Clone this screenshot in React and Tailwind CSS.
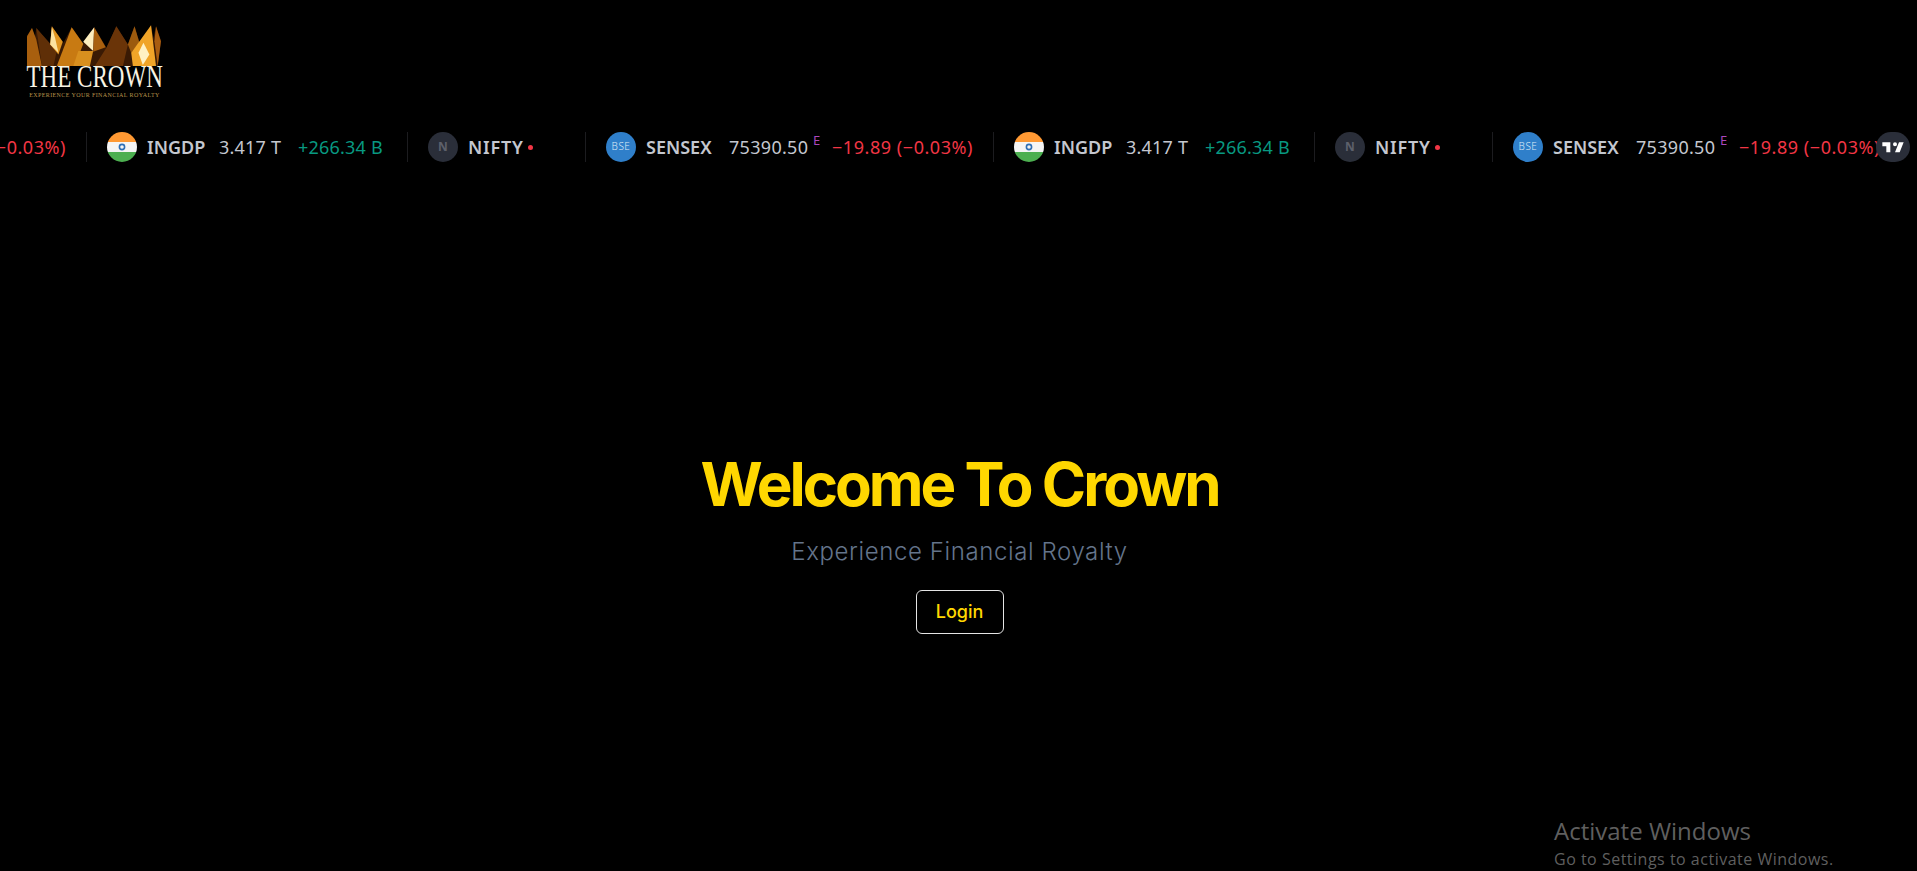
const UP = "text-[#089981]";
const DOWN = "text-[#f23645]";

function Flag() {
  return (
    <svg width="30" height="30" viewBox="0 0 30 30" className="shrink-0">
      <defs>
        <clipPath id="flag-circle"><circle cx="15" cy="15" r="15" /></clipPath>
      </defs>
      <g clipPath="url(#flag-circle)">
        <rect width="30" height="10" fill="#ff9933" />
        <rect y="10" width="30" height="10" fill="#f5f5f5" />
        <rect y="20" width="30" height="10" fill="#4caf50" />
      </g>
      <circle cx="15" cy="15" r="2.6" fill="none" stroke="#2f6fb5" strokeWidth="1.6" />
    </svg>
  );
}

function Ingdp() {
  return (
    <div className="flex h-[30px] w-[321px] shrink-0 items-center border-l border-[#1c1c1f] pl-5">
      <Flag />
      <span className="ml-[10px] w-[57px] font-semibold text-[#c4c7cf]">INGDP</span>
      <span className="ml-[15px] w-[64px] tracking-[0.2px] text-[#c4c7cf]">3.417 T</span>
      <span className={`ml-[15px] tracking-[0.2px] ${UP}`}>+266.34 B</span>
    </div>
  );
}

function Nifty() {
  return (
    <div className="flex h-[30px] w-[178px] shrink-0 items-center border-l border-[#1c1c1f] pl-5">
      <div className="flex h-[30px] w-[30px] items-center justify-center rounded-full bg-[#2a2e39] text-xs font-bold text-[#5d606b]">N</div>
      <span className="ml-[10px] w-[55px] font-semibold tracking-[0.8px] text-[#c4c7cf]">NIFTY</span>
      <span className="ml-[5px] h-[5px] w-[5px] rounded-full bg-[#f23645]" />
    </div>
  );
}

function Sensex() {
  return (
    <div className="flex h-[30px] w-[408px] shrink-0 items-center border-l border-[#1c1c1f] pl-5">
      <div className="flex h-[30px] w-[30px] items-center justify-center rounded-full bg-[#2f7fca] text-[10px] font-light tracking-[0.5px] text-[#dbe9f6]">BSE</div>
      <span className="ml-[10px] w-[68px] font-semibold text-[#c4c7cf]">SENSEX</span>
      <span className="ml-[15px] w-[81px] tracking-[0.3px] text-[#c4c7cf]">75390.50</span>
      <span className="ml-[3px] w-[16px] self-start text-[13px] leading-[16px] text-[#ab47bc]">E</span>
      <span className={`ml-[3px] tracking-[0.55px] ${DOWN}`}>−19.89 (−0.03%)</span>
    </div>
  );
}

function Crown() {
  return (
    <svg width="137" height="43" viewBox="78 68 412 130" className="block">
      <polygon points="80,195 80,105 95,80 104,108 108,80 150,130 155,75 190,125 215,78 250,128 283,78 320,140 350,75 385,130 405,75 420,125 455,72 462,110 470,75 485,120 475,195" fill="#3a1a04" />
      <polygon points="80,195 80,105 95,80 108,115 125,195" fill="#a85f0e" />
      <polygon points="108,80 170,150 160,195 125,195" fill="#5f2f07" />
      <polygon points="155,75 188,122 175,160 150,130" fill="#e0941f" />
      <polygon points="155,78 165,110 175,155 150,130" fill="#fde3a0" />
      <polygon points="215,78 250,128 225,195 170,195" fill="#c87a12" />
      <polygon points="250,122 283,78 280,150" fill="#fdeebf" />
      <polygon points="283,78 318,138 280,152" fill="#a9600f" />
      <polygon points="235,150 280,150 270,195 220,195" fill="#d88f1e" />
      <polygon points="350,75 385,130 370,195 285,195 320,140" fill="#6a3408" />
      <polygon points="405,75 420,125 395,155 385,130" fill="#9c5a0e" />
      <polygon points="455,72 470,195 400,195 395,155" fill="#f0a428" />
      <polygon points="432,125 450,160 430,192 417,155" fill="#fff1c4" />
      <polygon points="470,75 485,120 475,195 465,120" fill="#a85c10" />
    </svg>
  );
}

function Logo() {
  return (
    <div className="flex w-[137px] flex-col items-center">
      <Crown />
      <div className="-mt-[4px] scale-x-[0.72] whitespace-nowrap font-['Liberation_Serif',serif] text-[32px] leading-[26px] text-[#f8f3e3]">THE CROWN</div>
      <div className="mt-[2px] whitespace-nowrap font-['Liberation_Serif',serif] text-[6px] leading-[8px] tracking-[0.4px] text-[#b8934a]">EXPERIENCE YOUR FINANCIAL ROYALTY</div>
    </div>
  );
}

export default function App() {
  return (
    <div className="relative flex h-screen flex-col overflow-hidden bg-black font-['Inter',sans-serif]">
      <header className="h-[132px] pl-[26px] pt-6">
        <Logo />
      </header>

      {/* TICKER */}
      <div className="relative overflow-hidden font-['Noto_Sans',sans-serif] text-lg">
        <div className="-ml-[821px] flex whitespace-nowrap">
          <Ingdp /><Nifty /><Sensex />
          <Ingdp /><Nifty /><Sensex />
          <Ingdp /><Nifty /><Sensex />
        </div>
        <div className="absolute right-[7px] top-0 flex h-[30px] w-[34px] items-center justify-center rounded-full bg-[#2a2e39]">
          <svg width="24" height="19" viewBox="0 0 36 28" fill="#fff">
            <path d="M14 6H2v6h6v9h6V6Zm14 15h-7l6-15h7l-6 15Zm-7-9a3 3 0 1 0 0-6 3 3 0 0 0 0 6Z" />
          </svg>
        </div>
      </div>

      <main className="flex flex-1 flex-col items-center pl-[2px] pt-[292px]">
        <h1 className="text-6xl font-bold tracking-tighter text-[#ffd700]">Welcome To Crown</h1>
        <p className="mt-[22px] text-2xl font-light tracking-wide text-[#64748b]">Experience Financial Royalty</p>
        <button className="mt-[22px] h-[44px] w-[88px] rounded-md border border-[#e5e5e5] text-lg font-medium text-[#ffd700]">Login</button>
      </main>

      <div className="absolute left-[1554px] top-[815px] font-['Open_Sans',sans-serif] text-[#5f5f5f]">
        <div className="text-2xl leading-8">Activate Windows</div>
        <div className="text-base leading-6 tracking-[0.5px]">Go to Settings to activate Windows.</div>
      </div>
    </div>
  );
}
